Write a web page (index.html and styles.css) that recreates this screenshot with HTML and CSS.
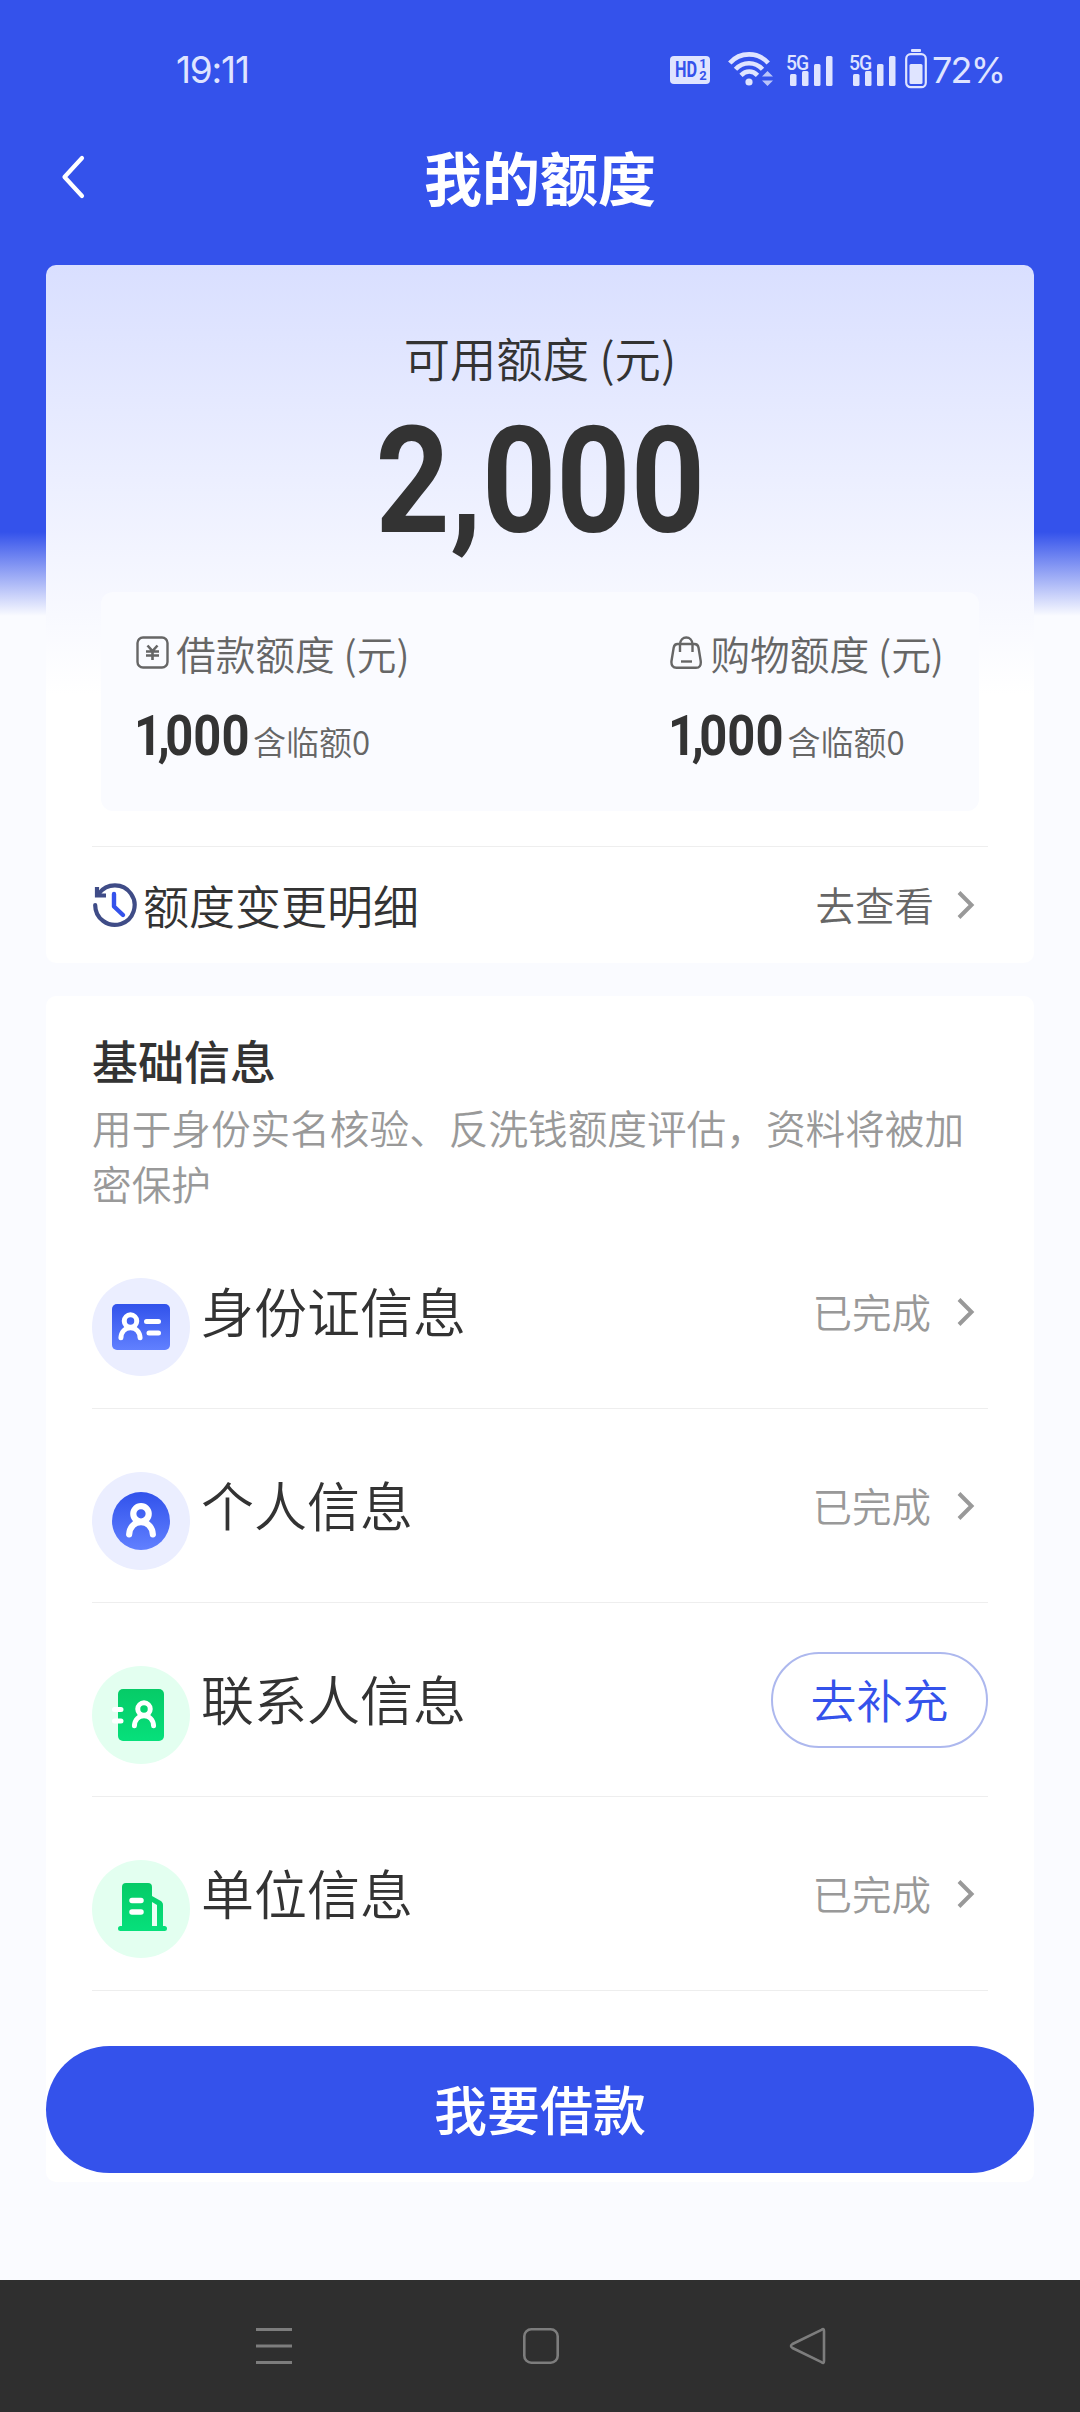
FILE: index.html
```html
<!DOCTYPE html>
<html lang="zh-CN">
<head>
<meta charset="utf-8">
<title>我的额度</title>
<link rel="stylesheet" href="styles.css">
</head>
<body>
<svg class="defs" width="0" height="0" aria-hidden="true">
  <defs>
    <linearGradient id="blue" x1="0" y1="0" x2="0" y2="1"><stop offset="0" stop-color="#3152eb"/><stop offset="1" stop-color="#6180ff"/></linearGradient>
    <linearGradient id="green" x1="0" y1="0" x2="0" y2="1"><stop offset="0" stop-color="#06cb67"/><stop offset="1" stop-color="#06e07b"/></linearGradient>
    <symbol id="chevron" viewBox="0 0 20 32"><path d="M3 3.500L15.500 16L3 28.500" fill="none" stroke="#999" stroke-width="4"/></symbol>
    <symbol id="signal" viewBox="0 0 48 34"><g fill="#dfe4ff"><rect x="4" y="21" width="6.500" height="12" rx="1.500"/><rect x="16" y="18" width="6.500" height="15" rx="1.500"/><rect x="28" y="11" width="6.500" height="22" rx="1.500"/><rect x="40" y="3" width="6.500" height="30" rx="1.500"/></g></symbol>
    <symbol id="person" viewBox="0 0 30 34"><circle cx="15" cy="10.500" r="7.500" fill="none" stroke="#fff" stroke-width="6"/><path d="M3.500 30.500C4 23 9 18.500 15 18.500S26 23 26.500 30.500" fill="none" stroke="#fff" stroke-width="6" stroke-linecap="round"/></symbol>
  </defs>
</svg>
<div class="screen">
  <header class="status">
    <span class="clock">19:11</span>
    <div class="indicators">
      <span class="hd"><b>HD</b><span class="hd-nums"><i>1</i><i>2</i></span></span>
      <svg class="wifi" width="46" height="36" viewBox="0 0 46 36"><g fill="none" stroke="#dfe4ff" stroke-width="4.600"><path d="M1.800 12C12 .5 30 .5 40.200 12"/><path d="M7.500 18.300C15 10.300 27 10.300 34.500 18.300"/><path d="M13 24.300C18 19.300 24.500 19.300 29.500 24.300"/></g><circle cx="21" cy="31" r="3.600" fill="#dfe4ff"/><path d="M34 25.500L39.500 20L45 25.500ZM34 29.500L39.500 35L45 29.500Z" fill="#b9c4fa"/></svg>
      <span class="cell"><svg width="48" height="34"><use href="#signal"/></svg><em>5G</em></span>
      <span class="cell cell-b"><svg width="48" height="34"><use href="#signal"/></svg><em>5G</em></span>
      <svg class="battery" width="22" height="40" viewBox="0 0 22 40"><rect x="6" y="0" width="10" height="3" rx="1" fill="#dfe4ff"/><rect x="1.200" y="5.200" width="19.600" height="33" rx="4.500" fill="none" stroke="#dfe4ff" stroke-width="2.200"/><rect x="4.500" y="15" width="13" height="20" rx="1.500" fill="#dfe4ff"/></svg>
      <span class="percent">72%</span>
    </div>
  </header>

  <nav class="topbar">
    <svg width="26" height="44" viewBox="0 0 26 44"><path d="M22 3L4.500 22L22 41" fill="none" stroke="#fff" stroke-width="4.200" stroke-linecap="round" stroke-linejoin="round"/></svg>
    <h1>我的额度</h1>
  </nav>

  <main>
    <section class="card quota">
      <p class="quota-label">可用额度 (元)</p>
      <p class="quota-total"><span>2,000</span></p>
      <div class="split">
        <div class="part">
          <p class="part-label"><svg width="34" height="34" viewBox="0 0 34 34" fill="none" stroke="#666"><rect x="1.500" y="1.500" width="30" height="30" rx="5.500" stroke-width="2.400"/><path d="M11.500 9.500L16.500 15L21.500 9.500M10 15.500H23M10 19.500H23M16.500 15V24" stroke-width="2.600"/></svg>借款额度 (元)</p>
          <p class="part-value"><b><i>1,</i>000</b><span>含临额0</span></p>
        </div>
        <div class="part">
          <p class="part-label"><svg width="34" height="34" viewBox="0 0 34 34" fill="none" stroke="#666" stroke-width="2.400"><path d="M7.500 8H24.500C27 8 28 9 28.500 11.500L30.700 25C31.200 29.500 29.500 31.800 26 31.800H6.500C3 31.800 1 29.500 1.500 25L3.700 11.500C4.200 9 5 8 7.500 8Z"/><path d="M10 16V8.500C10 -.8 22.500 -.8 22.500 8.500V16"/><path d="M11 25.500H22"/></svg>购物额度 (元)</p>
          <p class="part-value"><b><i>1,</i>000</b><span>含临额0</span></p>
        </div>
      </div>
      <div class="history">
        <svg width="46" height="46" viewBox="0 0 46 46" fill="none"><path d="M3.200 23A19.700 19.700 0 1 0 7 11.500" stroke="#3f4c87" stroke-width="4.200" stroke-linecap="round"/><path d="M5 5V13.500H14" stroke="#3f4c87" stroke-width="4.200"/><path d="M22 12V24.500L31 33" stroke="#3452eb" stroke-width="4.400" stroke-linecap="round" stroke-linejoin="round"/></svg>
        <span class="history-name">额度变更明细</span>
        <span class="history-go">去查看</span>
        <svg class="chev" width="20" height="32"><use href="#chevron"/></svg>
      </div>
    </section>

    <section class="card info">
      <h2>基础信息</h2>
      <p class="desc">用于身份实名核验、反洗钱额度评估，资料将被加密保护</p>
      <ul>
        <li>
          <svg class="badge" width="98" height="98" viewBox="0 0 98 98"><circle cx="49" cy="49" r="49" fill="#ebeeff"/><rect x="20" y="26" width="58" height="46" rx="5" fill="url(#blue)"/><use href="#person" x="26" y="34" width="25" height="29"/><path d="M54.500 43.500H66.500M57 55H66.500" stroke="#fff" stroke-width="5" stroke-linecap="round"/></svg>
          <span class="name">身份证信息</span><span class="state">已完成</span><svg class="chev" width="20" height="32"><use href="#chevron"/></svg>
        </li>
        <li>
          <svg class="badge" width="98" height="98" viewBox="0 0 98 98"><circle cx="49" cy="49" r="49" fill="#ebeeff"/><circle cx="49" cy="49" r="29" fill="url(#blue)"/><use href="#person" x="33.500" y="31" width="31" height="35"/></svg>
          <span class="name">个人信息</span><span class="state">已完成</span><svg class="chev" width="20" height="32"><use href="#chevron"/></svg>
        </li>
        <li>
          <svg class="badge" width="98" height="98" viewBox="0 0 98 98"><circle cx="49" cy="49" r="49" fill="#e3fff0"/><rect x="26" y="23" width="46" height="52" rx="5" fill="url(#green)"/><use href="#person" x="39.500" y="34" width="25" height="29"/><path d="M22.500 43.500H29M22.500 55H29" stroke="#fff" stroke-width="5" stroke-linecap="round"/></svg>
          <span class="name">联系人信息</span><button class="fill-in">去补充</button>
        </li>
        <li>
          <svg class="badge" width="98" height="98" viewBox="0 0 98 98"><circle cx="49" cy="49" r="49" fill="#e3fff0"/><path d="M30 66V27Q30 23 34 23H56Q60 23 60 27V36L68 40.500Q71 42 71 45V66H72.500A2.500 2.500 0 0 1 72.500 71H28.500A2.500 2.500 0 0 1 28.500 66Z" fill="url(#green)"/><path d="M60 42L65 45V66H60Z" fill="#e9fff3"/><path d="M40 40.500H49M40 52H49" stroke="#fff" stroke-width="5.500" stroke-linecap="round"/></svg>
          <span class="name">单位信息</span><span class="state">已完成</span><svg class="chev" width="20" height="32"><use href="#chevron"/></svg>
        </li>
      </ul>
      <button class="borrow">我要借款</button>
    </section>
  </main>

  <footer class="navbar">
    <svg width="40" height="40" viewBox="0 0 40 40" fill="none" stroke="#7d7d7d" stroke-width="3"><path d="M2 3.500H38M2 20H38M2 36.500H38"/></svg>
    <svg width="40" height="40" viewBox="0 0 40 40" fill="none" stroke="#7d7d7d" stroke-width="2.600"><rect x="3.300" y="3.300" width="33.400" height="33.400" rx="7"/></svg>
    <svg width="40" height="40" viewBox="0 0 40 40" fill="none" stroke="#7d7d7d" stroke-width="2.600" stroke-linejoin="round"><path d="M33.500 3.800Q36 2 36 5V35Q36 38 33.500 36.200L4.500 22Q1.500 20 4.500 18Z"/></svg>
  </footer>
</div>
</body>
</html>
```
FILE: styles.css
```css
* { box-sizing: border-box; }
body { margin: 0; font-family: "Noto Sans CJK SC", sans-serif; font-weight: 350; color: #333; }
h1, h2, p, ul { margin: 0; padding: 0; font-weight: inherit; list-style: none; }
button { font: inherit; padding: 0; margin: 0; }
svg { flex: none; display: block; }
.defs { position: absolute; }

.screen {
  width: 1080px;
  height: 2412px;
  display: flex;
  flex-direction: column;
  overflow: hidden;
  background: linear-gradient(#3452eb 0, #3452eb 532px, #fafbff 616px);
}

/* system status bar */
.status {
  height: 140px;
  padding: 0 75px 0 176px;
  display: flex;
  align-items: center;
  justify-content: space-between;
  color: #dfe4ff;
  font-family: Inter, sans-serif;
  font-weight: 400;
}
.clock { font-size: 37px; line-height: 44px; width: 80px; letter-spacing: -1.2px; }
.indicators { display: flex; align-items: center; }
.hd {
  width: 40px; height: 28px;
  display: flex; align-items: center; justify-content: center;
  border-radius: 4px;
  background: #dfe4ff;
  color: #3452eb;
}
.hd b { width: 22px; margin-left: 2px; font: 700 22px/28px Roboto, sans-serif; transform: scaleX(.74); transform-origin: 0 50%; }
.hd-nums { display: grid; margin-left: 2px; }
.hd-nums i { font: 700 13px/12px Roboto, sans-serif; }
.wifi { margin: -2px 0 0 18px; }
.cell { position: relative; margin-left: 12px; }
.cell-b { margin-left: 15px; }
.cell em { position: absolute; left: 0; top: 0; font: 500 21px/20px Roboto, sans-serif; letter-spacing: -1px; transform: scaleX(.92); transform-origin: 0 0; color: #dfe4ff; text-shadow: 0 1px #3452eb; }
.battery { margin: -3px 0 0 8px; }
.percent { width: 73px; margin-left: 5px; font-size: 36px; line-height: 44px; letter-spacing: -1.800px; }

.topbar {
  height: 125px;
  display: grid;
  grid-template-columns: 120px 1fr 120px;
  align-items: center;
  padding-bottom: 53px;
}
.topbar svg { margin: 2px 0 0 60px; }
.topbar h1 { text-align: center; font-size: 58px; font-weight: 700; line-height: 70px; color: #fff; }

main { flex: 1; padding: 0 46px; }
.card { border-radius: 10px; background: #fff; }

/* quota summary */
.quota {
  height: 698px;
  padding: 64px 46px 0;
  background: linear-gradient(#d9dfff, #fff 430px);
}
.quota-label { text-align: center; font-size: 46.300px; line-height: 56px; }
.quota-total {
  height: 207px;
  padding-top: 21px;
  display: flex;
  justify-content: center;
  font: 700 149px/150px Roboto, sans-serif;
}
.quota-total span { transform: scaleX(.87); }
.split {
  height: 219px;
  margin: 0 9px;
  padding: 35px 35px 0;
  display: flex;
  justify-content: space-between;
  border-radius: 12px;
  background: #fafbff;
  color: #666;
}
.part-label { display: flex; align-items: center; gap: 6px; font-size: 39.700px; line-height: 52px; }
.part-value { display: flex; align-items: baseline; margin-top: 25px; height: 64px; }
.part-value b { width: 119px; margin-left: -2px; font: 700 55px/64px Roboto, sans-serif; color: #333; transform: scaleX(.89); transform-origin: 0 0; }
.part-value i { font-style: normal; letter-spacing: -5px; }
.part-value span { font-size: 33px; line-height: 44px; }
.history { height: 118px; margin-top: 35px; padding-bottom: 2px; border-top: 1px solid #eee; display: flex; align-items: center; }
.history-name { flex: 1; margin: -2px 0 0 5px; font-size: 46px; line-height: 56px; }
.history-go { margin-top: -2px; font-size: 39.500px; line-height: 50px; color: #666; }
.chev { margin: 0 12px 0 22px; }

/* basic information */
.info { height: 1186px; margin-top: 33px; padding: 33px 46px 0; }
.info h2 { font-size: 46px; font-weight: 500; line-height: 60px; }
.desc { margin-top: 10px; font-size: 39.650px; line-height: 56px; color: #999; }
.info ul { margin-top: 4px; }
.info li { height: 194px; display: flex; align-items: center; border-bottom: 1px solid #eee; }
.badge { margin-top: 30px; }
.name { flex: 1; margin: -4px 0 0 11px; font-size: 53px; line-height: 64px; }
.state { margin: -2px 3px 0 0; font-size: 39.500px; line-height: 50px; color: #999; }
.fill-in {
  width: 217px; height: 96px;
  padding-bottom: 4px;
  border: 2px solid #adb8ee;
  border-radius: 48px;
  background: #fff;
  color: #3452eb;
  font-size: 46px;
}
.borrow {
  display: block;
  width: 988px; height: 127px;
  margin: 55px 0 0 -46px;
  padding-bottom: 4px;
  border: 0;
  border-radius: 64px;
  background: #3452eb;
  color: #fff;
  font-size: 53px;
  font-weight: 500;
}

/* system navigation bar */
.navbar {
  height: 132px;
  padding: 0 252px 0 254px;
  display: flex;
  align-items: center;
  justify-content: space-between;
  background: #2f2f2f;
}
```
